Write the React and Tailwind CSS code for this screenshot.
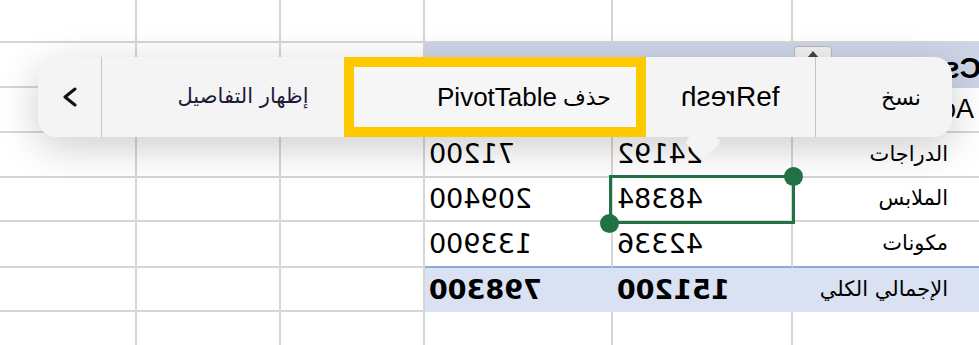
import React from "react";

const ar = { fontFamily: "'DejaVu Sans', sans-serif" };
const num = { fontFamily: "'DejaVu Sans', sans-serif" };
const sans = { fontFamily: "'Liberation Sans', sans-serif" };

// rows of the pivot table: label, value A, value B (shown mirrored)
const rows = [
  { label: "الدراجات", a: "24192", b: "71200", h: "h-[45px]" },
  { label: "الملابس", a: "48384", b: "209400", h: "h-[44px]" },
  { label: "مكونات", a: "42336", b: "133900", h: "h-[46px]" },
];

function Mirror({ children, className = "" }) {
  return <span className={"inline-block -scale-x-100 " + className}>{children}</span>;
}

function Chevron() {
  return (
    <svg width="16" height="20" viewBox="0 0 16 20" fill="none">
      <polyline points="13,2 3,10 13,18" stroke="#111" strokeWidth="3" strokeLinecap="round" strokeLinejoin="round" />
    </svg>
  );
}

export default function App() {
  const line = "border-[#d6d6d6]";
  return (
    <div className="relative w-[979px] h-[345px] overflow-hidden bg-white text-black">
      {/* top empty row */}
      <div className="flex h-[43px]">
        <div className={`w-[137px] border-r-2 border-b-2 ${line}`} />
        <div className={`w-[144px] border-r-2 border-b-2 ${line}`} />
        <div className={`w-[144px] border-r-2 border-b-2 ${line}`} />
        <div className={`w-[188px] border-r-2 border-b-2 ${line}`} />
        <div className={`w-[180px] border-r-2 border-b-2 ${line}`} />
        <div className={`flex-1 border-b-2 ${line}`} />
      </div>

      {/* header row */}
      <div className="flex h-[45px]">
        <div className={`w-[137px] border-r-2 border-b-2 ${line}`} />
        <div className={`w-[144px] border-r-2 border-b-2 ${line}`} />
        <div className={`w-[144px] border-r-2 border-b-2 ${line}`} />
        <div className="w-[188px] bg-[#cdd4e6] border-b-2 border-[#cdd4e6]" />
        <div className="w-[180px] bg-[#cdd4e6] border-b-2 border-[#cdd4e6]" />
        <div className="relative flex-1 bg-[#cdd4e6] overflow-hidden">
          <div className="absolute left-[1px] top-[3px] w-[38px] h-[30px] rounded-[4px] border border-[#b9b9b9] bg-[#f2f2f2] flex justify-center pt-[4px]">
            <svg width="12" height="8" viewBox="0 0 12 8"><polygon points="6,0 12,7 0,7" fill="#444" /></svg>
          </div>
          <div className="pl-[150px] pt-[2px] text-[30px] font-bold whitespace-nowrap" style={sans}>
            <Mirror>Cs</Mirror>
          </div>
        </div>
      </div>

      {/* row labels header */}
      <div className="flex h-[45px]">
        <div className={`w-[137px] border-r-2 border-b-2 ${line}`} />
        <div className={`w-[144px] border-r-2 border-b-2 ${line}`} />
        <div className={`w-[144px] border-r-2 border-b-2 ${line}`} />
        <div className={`w-[188px] border-r-2 border-b-2 ${line}`} />
        <div className={`w-[180px] border-r-2 border-b-2 ${line}`} />
        <div className={`flex-1 border-b-2 ${line} overflow-hidden flex items-center pl-[148px] text-[27px] whitespace-nowrap`} style={sans}>
          oA
        </div>
      </div>

      {rows.map((r, i) => (
        <div key={r.label} className={`flex ${r.h}`}>
          <div className={`w-[137px] border-r-2 border-b-2 ${line}`} />
          <div className={`w-[144px] border-r-2 border-b-2 ${line}`} />
          <div className={`w-[144px] border-r-2 border-b-2 ${line}`} />
          <div className={`w-[188px] border-r-2 border-b-2 ${line} ${i === 2 ? "border-b-[#8eaadb]" : ""} flex items-center pl-[4px] text-[27px]`} style={num}>
            <Mirror>{r.b}</Mirror>
          </div>
          <div className={`w-[180px] border-r-2 border-b-2 ${line} ${i === 2 ? "border-b-[#8eaadb]" : ""} flex items-center pl-[4px] text-[27px]`} style={num}>
            <Mirror>{r.a}</Mirror>
          </div>
          <div className={`flex-1 border-b-2 ${i === 2 ? "border-[#8eaadb]" : line} flex items-center justify-end pr-[31px] text-[21px] whitespace-nowrap`} style={ar}>
            {r.label}
          </div>
        </div>
      ))}

      {/* grand total */}
      <div className="flex h-[44px]">
        <div className={`w-[137px] border-r-2 border-b-2 ${line}`} />
        <div className={`w-[144px] border-r-2 border-b-2 ${line}`} />
        <div className={`w-[144px] border-r-2 border-b-2 ${line}`} />
        <div className="w-[188px] bg-[#d9e1f2] flex items-center pl-[4px] text-[27px] font-bold" style={num}>
          <Mirror>798300</Mirror>
        </div>
        <div className="w-[180px] bg-[#d9e1f2] flex items-center pl-[4px] text-[27px] font-bold" style={num}>
          <Mirror>151200</Mirror>
        </div>
        <div className="flex-1 bg-[#d9e1f2] flex items-center justify-end pr-[31px] text-[21px] whitespace-nowrap" style={ar}>
          الإجمالي الكلي
        </div>
      </div>

      {/* last empty row */}
      <div className="flex h-[40px]">
        <div className={`w-[137px] border-r-2 ${line}`} />
        <div className={`w-[144px] border-r-2 ${line}`} />
        <div className={`w-[144px] border-r-2 ${line}`} />
        <div className={`w-[188px] border-r-2 ${line}`} />
        <div className={`w-[180px] border-r-2 ${line}`} />
        <div className="flex-1" />
      </div>

      {/* selection box */}
      <div className="absolute left-[609px] top-[175px] w-[186px] h-[49px] border-[3px] border-[#217346]" />
      <div className="absolute left-[784px] top-[167px] w-[19px] h-[19px] rounded-full bg-[#217346]" />
      <div className="absolute left-[600px] top-[214px] w-[19px] h-[19px] rounded-full bg-[#217346]" />

      {/* context menu */}
      <div className="absolute left-[38px] top-[57px] w-[914px] h-[80px] rounded-[18px] bg-[#f4f4f4] shadow-[0_10px_40px_rgba(0,0,0,0.2)] flex items-stretch">
        <div className="w-[64px] border-r border-[#c4c4c4] flex items-center justify-center">
          <Chevron />
        </div>
        <div className="w-[242px] flex items-center justify-center pl-[40px] text-[21px] text-[#1c1c3a] whitespace-nowrap" style={ar}>
          إظهار التفاصيل
        </div>
        <div className="w-[302px] border-[10px] border-[#ffc900] bg-[#f6f6f6] flex items-center justify-center pl-[58px] text-[26px] whitespace-nowrap">
          <span style={sans}>PivotTable</span>
          <span style={ar} className="ml-[6px] text-[22px]">حذف</span>
        </div>
        <div className="w-[170px] border-r border-[#c4c4c4] flex items-center justify-center text-[28px]" style={sans}>
          <Mirror>resh</Mirror>
          <span>Ref</span>
        </div>
        <div className="flex-1 flex items-center justify-center pl-[34px] text-[22px]" style={ar}>
          نسخ
        </div>
        {/* pointer */}
        <div className="absolute left-[652px] top-[72px] w-[26px] h-[26px] rotate-45 rounded-[4px] bg-[#f4f4f4]" />
      </div>
    </div>
  );
}
